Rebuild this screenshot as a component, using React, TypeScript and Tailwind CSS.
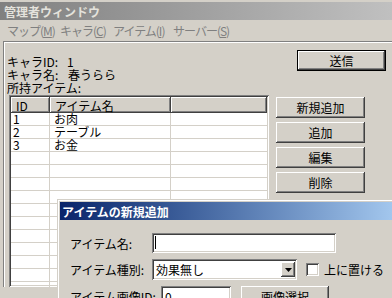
import React from "react";

const raised =
  "bg-[#d4d0c8] shadow-[inset_-1px_-1px_#404040,inset_1px_1px_#ffffff,inset_-2px_-2px_#808080,inset_2px_2px_#d4d0c8]";
const sunken =
  "bg-white shadow-[inset_1px_1px_#808080,inset_-1px_-1px_#ffffff,inset_2px_2px_#404040,inset_-2px_-2px_#d4d0c8]";

const Btn: React.FC<{ label: string; className?: string }> = ({ label, className = "" }) => (
  <div className={`${raised} flex items-center justify-center text-[12px] text-black ${className}`}>{label}</div>
);

const items = [
  { id: "1", name: "お肉" },
  { id: "2", name: "テーブル" },
  { id: "3", name: "お金" },
];

const App: React.FC = () => {
  const rows = Array.from({ length: 14 }, (_, i) => items[i]);

  return (
    <div className="relative w-[392px] h-[298px] overflow-hidden bg-[#d4d0c8] font-['Noto_Sans_CJK_JP',sans-serif] text-black leading-[13px]">
      {/* タイトルバー */}
      <div className="pt-[2px]">
        <div className="h-[18px] bg-gradient-to-r from-[#808080] to-[#c0c0c0] flex items-center pl-[4px]">
          <span className="text-[12px] font-bold text-[#e4e2dc]">管理者ウィンドウ</span>
        </div>
      </div>

      {/* メニュー */}
      <div className="h-[21px] flex items-center pl-[7px] text-[12px] tracking-[-1px] text-[#808080] whitespace-nowrap">
        <span className="w-[53px] shrink-0">マップ(<u>M</u>)</span>
        <span className="w-[53px] shrink-0">キャラ(<u>C</u>)</span>
        <span className="w-[60px] shrink-0">アイテム(<u>I</u>)</span>
        <span className="shrink-0">サーバー(<u>S</u>)</span>
      </div>

      {/* 本体 */}
      <div className="ml-[3px] border-t border-l border-[#808080]">
        <div className="border-t border-l border-white">
          <div className="flex items-start">
            <div className="pt-[12px] pl-[2px] text-[12px]">
              <div className="flex">
                <span className="w-[60px]">キャラID:</span>
                <span>1</span>
              </div>
              <div className="flex">
                <span className="w-[61px]">キャラ名:</span>
                <span>春うらら</span>
              </div>
              <div>所持アイテム:</div>
            </div>
            <div className="ml-auto mr-[6px] mt-[7px] border border-black">
              <Btn label="送信" className="w-[87px] h-[19px]" />
            </div>
          </div>

          <div className="flex items-start mt-[1px]">
            <div className={`${sunken} ml-[4px] w-[260px] h-[192px] p-[2px] overflow-hidden`}>
              <div className="flex h-[16px] text-[12px]">
                <div className={`${raised} w-[39px] shrink-0 pl-[5px] flex items-center`}>ID</div>
                <div className={`${raised} w-[121px] shrink-0 pl-[5px] flex items-center`}>アイテム名</div>
                <div className={`${raised} flex-1`} />
              </div>
              {rows.map((r, i) => (
                <div key={i} className="flex h-[13px] border-b border-[#d4d0c8] text-[12px] leading-[12px]">
                  <div className="w-[39px] shrink-0 pl-[2px] border-r border-[#d4d0c8]">{r?.id}</div>
                  <div className="w-[121px] shrink-0 pl-[4px] border-r border-[#d4d0c8]">{r?.name}</div>
                  <div className="flex-1" />
                </div>
              ))}
            </div>
            <div className="ml-[7px] mt-[2px] flex flex-col gap-[4px]">
              <Btn label="新規追加" className="w-[89px] h-[21px]" />
              <Btn label="追加" className="w-[89px] h-[21px]" />
              <Btn label="編集" className="w-[89px] h-[21px]" />
              <Btn label="削除" className="w-[89px] h-[21px]" />
            </div>
          </div>
        </div>
      </div>

      {/* ダイアログ */}
      <div className="absolute left-[57px] top-[199px] w-[345px] h-[110px] bg-[#d4d0c8] p-[3px] shadow-[inset_1px_1px_#d4d0c8,inset_2px_2px_#ffffff]">
        <div className="h-[18px] bg-gradient-to-r from-[#0a246a] to-[#a6caf0] flex items-center pl-[2px]">
          <span className="text-[12px] font-bold text-white">アイテムの新規追加</span>
        </div>
        <div className="pl-[10px] pt-[13px] text-[12px]">
          <div className="flex items-center h-[20px]">
            <span className="w-[82px]">アイテム名:</span>
            <div className={`${sunken} w-[184px] h-[20px] relative`}>
              <div className="absolute left-[3px] top-[3px] w-px h-[13px] bg-black" />
            </div>
          </div>
          <div className="flex items-center h-[21px] mt-[6px]">
            <span className="w-[82px]">アイテム種別:</span>
            <div className={`${sunken} w-[145px] h-[21px] flex items-center pl-[4px] pr-[2px]`}>
              <span className="flex-1">効果無し</span>
              <div className={`${raised} w-[14px] h-[15px] flex items-center justify-center`}>
                <svg width="7" height="4" viewBox="0 0 7 4">
                  <path d="M0 0h7L3.5 4z" fill="#000" />
                </svg>
              </div>
            </div>
            <div className={`${sunken} w-[13px] h-[13px] ml-[9px]`} />
            <span className="ml-[5px]">上に置ける</span>
          </div>
          <div className="flex items-center h-[21px] mt-[6px]">
            <span className="w-[91px] whitespace-nowrap">アイテム画像ID:</span>
            <div className={`${sunken} w-[70px] h-[21px] flex items-center pl-[4px]`}>0</div>
            <Btn label="画像選択" className="w-[88px] h-[21px] ml-[10px]" />
          </div>
        </div>
      </div>
    </div>
  );
};

export default App;
